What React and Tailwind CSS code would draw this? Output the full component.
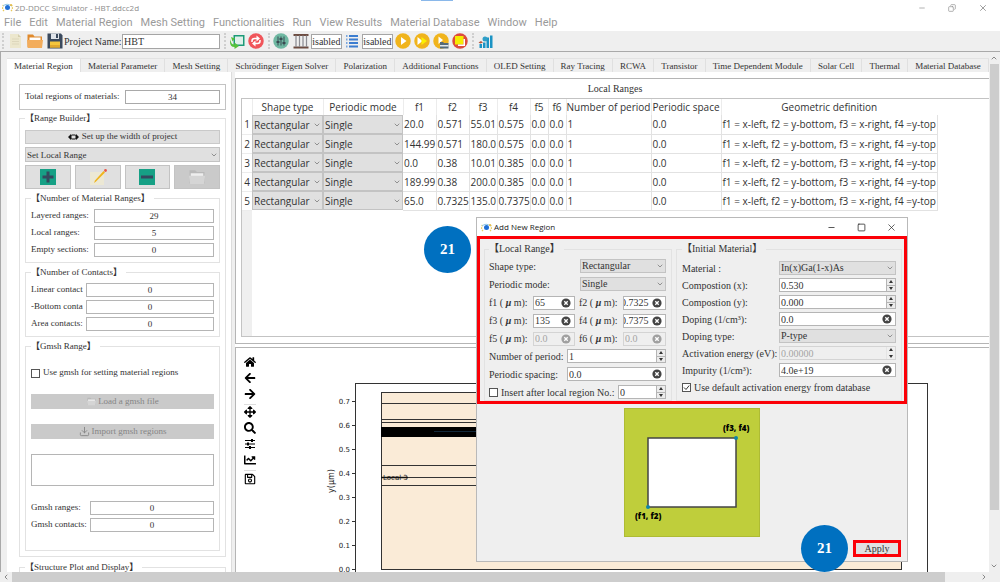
import { ChevronDown, ChevronLeft, ChevronRight, ChevronUp, Copy, Download, Minus, Square, X } from 'lucide-react';
import { FaArrowLeft, FaArrowRight, FaArrowsAlt, FaChartLine, FaHome, FaRegSave, FaSearch } from 'react-icons/fa';

const MENUS = ['File', 'Edit', 'Material Region', 'Mesh Setting', 'Functionalities', 'Run', 'View Results', 'Material Database', 'Window', 'Help'];

const TABS = [
    'Material Region', 'Material Parameter', 'Mesh Setting', 'Schrödinger Eigen Solver', 'Polarization',
    'Additional Functions', 'OLED Setting', 'Ray Tracing', 'RCWA', 'Transistor', 'Time Dependent Module',
    'Solar Cell', 'Thermal', 'Material Database',
];

const COLUMNS = ['Shape type', 'Periodic mode', 'f1', 'f2', 'f3', 'f4', 'f5', 'f6', 'Number of period', 'Periodic space', 'Geometric definition'];

const GEOMETRY = 'f1 = x-left, f2 = y-bottom, f3 = x-right, f4 =y-top';

const ROWS = [
    ['20.0', '0.571', '55.01', '0.575', '0.0', '0.0', '1', '0.0', GEOMETRY],
    ['144.99', '0.571', '180.0', '0.575', '0.0', '0.0', '1', '0.0', GEOMETRY],
    ['0.0', '0.38', '10.01', '0.385', '0.0', '0.0', '1', '0.0', GEOMETRY],
    ['189.99', '0.38', '200.0', '0.385', '0.0', '0.0', '1', '0.0', GEOMETRY],
    ['65.0', '0.7325', '135.0', '0.7375', '0.0', '0.0', '1', '0.0', GEOMETRY],
];

const TICKS = ['0.7', '0.6', '0.5', '0.4', '0.3', '0.2', '0.1', '0.0'];

function AppIcon() {
    return (
        <svg width="11" height="11" viewBox="0 0 22 22" aria-hidden="true">
            <path d="M4 18A9 9 0 0 1 3 6M18 18a9 9 0 0 0 1-12" fill="none" stroke="#e8c95a" strokeWidth="2.5" strokeDasharray="3 2" />
            <path d="M2 8q8-7 17 0" fill="none" stroke="#8fc6e8" strokeWidth="2" />
            <circle cx="11" cy="11" r="5" fill="#1f6fd6" />
            <circle cx="18" cy="6" r="2" fill="#e8b93a" />
        </svg>
    );
}

/* Form pieces */

function Group({ title, className = '', children }) {
    return (
        <fieldset className={`min-w-0 border border-[#e2e2e2] ${className}`}>
            <legend className="h-3 whitespace-nowrap pr-1 leading-3"><b>【</b>{title}<b>】</b></legend>
            {children}
        </fieldset>
    );
}

function Select({ value, label, id, className = '' }) {
    return (
        <div className={`relative ${className}`}>
            <select id={id} aria-label={label} defaultValue={value} className="block h-full w-full appearance-none border border-[#c3c3c3] bg-[#e0e0e0] pl-px leading-3 text-[#333] outline-none">
                <option>{value}</option>
            </select>
            <ChevronDown size={8} className="pointer-events-none absolute top-1/2 right-[2px] -translate-y-1/2 text-[#666]" />
        </div>
    );
}

function ReadOut({ id, label, value, labelClass }) {
    return (
        <div className="flex h-[14px] items-center">
            <label htmlFor={id} className={`shrink-0 overflow-hidden whitespace-nowrap ${labelClass}`}>{label}</label>
            <input id={id} readOnly value={value} className="h-full w-full min-w-0 border border-[#b5b5b5] bg-white text-center" />
        </div>
    );
}

function ClearField({ id, value, disabled, clip }) {
    return (
        <div className={`flex h-[14px] w-full min-w-0 items-center border ${disabled ? 'border-[#d4d4d4] bg-[#efefef]' : 'border-[#b5b5b5] bg-white'}`}>
            <input id={id} defaultValue={value} disabled={disabled} className={`h-full w-full min-w-0 bg-transparent outline-none disabled:text-[#a5a5a5] ${clip ? '-indent-[3px]' : 'pl-px'}`} />
            <button type="button" aria-label="Clear" disabled={disabled} className={`mr-[3px] shrink-0 ${disabled ? 'text-[#a0a0a0]' : 'text-[#444]'}`}>
                <svg className="block" width="10" height="10" viewBox="0 0 10 10">
                    <circle cx="5" cy="5" r="4.6" fill="currentColor" />
                    <path d="M3.3 3.3l3.4 3.4M6.7 3.3L3.3 6.7" stroke="#fff" strokeWidth="1.3" />
                </svg>
            </button>
        </div>
    );
}

function Spinner({ id, label, value, disabled }) {
    return (
        <div className={`flex h-[14px] w-full min-w-0 border ${disabled ? 'border-[#d4d4d4] bg-[#efefef] text-[#a5a5a5]' : 'border-[#b5b5b5] bg-white'}`}>
            <input id={id} aria-label={label} defaultValue={value} disabled={disabled} className="w-full min-w-0 bg-transparent pl-px outline-none" />
            <div className={`flex w-[9px] shrink-0 flex-col border-l ${disabled ? 'border-[#e4e4e4]' : 'border-[#b5b5b5] bg-[#ececec]'}`}>
                <button type="button" aria-label="Increase" disabled={disabled} className={`flex flex-1 items-center justify-center border-b ${disabled ? 'border-transparent' : 'border-[#b5b5b5]'}`}>
                    <svg width="4" height="3" viewBox="0 0 4 3"><path d="M2 0l2 3H0z" fill="#333" /></svg>
                </button>
                <button type="button" aria-label="Decrease" disabled={disabled} className="flex flex-1 items-center justify-center">
                    <svg width="4" height="3" viewBox="0 0 4 3"><path d="M2 3l2-3H0z" fill="#333" /></svg>
                </button>
            </div>
        </div>
    );
}

/* Toolbar */

function Handle() {
    return <div className="mx-1 h-4 border-l-2 border-dotted border-[#cfcfcf]"></div>;
}

function ToolButton({ label, children }) {
    return <button type="button" aria-label={label} className="mr-1 shrink-0">{children}</button>;
}

function RunIcon({ children, fill = '#f0b41c' }) {
    return (
        <svg className="block" width="16" height="16" viewBox="0 0 32 32">
            <circle cx="16" cy="16" r="15.5" fill={fill} />
            {children}
        </svg>
    );
}

function Toolbar() {
    return (
        <div className="flex h-[21px] shrink-0 items-center border-b border-[#a9a9a9] bg-[#efefef] pl-px text-[10px]">
            <div className="mr-1 ml-px h-4 border-l-2 border-dotted border-[#cfcfcf]"></div>
            <ToolButton label="New">
                <svg className="block" width="15" height="16" viewBox="0 0 30 32">
                    <path d="M4 2h16l6 6v22H4z" fill="#ece7cd" />
                    <path d="M20 2v6h6z" fill="#d5cfae" />
                    <path d="M8 12h14M8 17h14M8 22h14" stroke="#d8d2b6" strokeWidth="1.5" />
                </svg>
            </ToolButton>
            <ToolButton label="Open">
                <svg className="block" width="16" height="16" viewBox="0 0 32 32">
                    <path d="M1 3h11l3 4h15v22H1z" fill="#e08a2c" />
                    <path d="M5 9h22v10H5z" fill="#fff" />
                    <path d="M0 14h32l-2 16H2z" fill="#f3ad5c" />
                </svg>
            </ToolButton>
            <button type="button" aria-label="Save" className="mr-px shrink-0">
                <svg className="block" width="16" height="16" viewBox="0 0 32 32">
                    <path d="M1 1h27l3 4v26H1z" fill="#3b4a5e" />
                    <path d="M8 1h16v11H8z" fill="#dfe4ea" />
                    <path d="M18 2h4v8h-4z" fill="#3b4a5e" />
                    <path d="M6 17h20v12H6z" fill="#f4c63d" />
                    <path d="M6 24h20v5H6z" fill="#e0a82e" />
                </svg>
            </button>
            <label htmlFor="project" className="w-[58px] whitespace-nowrap">Project Name:</label>
            <input id="project" defaultValue="HBT" className="h-[15px] w-[98px] border border-[#a5a5a5] bg-white pl-px outline-none" />
            <Handle />
            <button type="button" aria-label="Load result" className="mr-[3px] shrink-0">
                <svg className="block" width="15" height="16" viewBox="0 0 30 32">
                    <path d="M7 4h22v22H7z" fill="#1c9a78" />
                    <path d="M10 7h16v16H10z" fill="#dff0ea" />
                    <path d="M1 12q0 11 8 11v-4l9 7-9 6v-4Q0 28 0 18z" fill="#55c23a" />
                    <path d="M2 8l8 3-5 6z" fill="#55c23a" />
                </svg>
            </button>
            <ToolButton label="Refresh">
                <RunIcon fill="#f0555a">
                    <path d="M8 18v-2q0-5 5-5h5M24 14v2q0 5-5 5h-5" fill="none" stroke="#fff" strokeWidth="3" />
                    <path d="M17 5l7 6-7 6zM15 15l-7 6 7 6z" fill="#fff" />
                </RunIcon>
            </ToolButton>
            <div className="mr-[3px] h-4 border-l-2 border-dotted border-[#cfcfcf]"></div>
            <ToolButton label="Options">
                <RunIcon fill="#6fb8a2">
                    <path d="M10 7v18M16 7v18M22 7v18" stroke="#3a4a52" strokeWidth="2" />
                    <path d="M7 18h6M13 12h6M19 20h6" stroke="#3a4a52" strokeWidth="4" />
                </RunIcon>
            </ToolButton>
            <button type="button" aria-label="Mesh" className="mr-[2px] shrink-0">
                <svg className="block" width="16" height="16" viewBox="0 0 32 32">
                    <path d="M1 4h30M1 29h30" stroke="#6d4c41" strokeWidth="4" />
                    <path d="M6 5v23M13 5v23M20 5v23M27 5v23" stroke="#8d8d93" strokeWidth="2.5" />
                </svg>
            </button>
            <input aria-label="Mesh state" readOnly value="Disabled" className="mr-1 h-[15px] w-[31px] border border-[#a5a5a5] bg-white -indent-[7px]" />
            <ToolButton label="List">
                <svg className="block" width="12" height="14" viewBox="0 0 24 28">
                    <path d="M6 4h18M6 11h18M6 18h18M6 25h18" stroke="#3c7dd0" strokeWidth="4" />
                    <path d="M0 4h3M0 11h3M0 18h3M0 25h3" stroke="#7ba7de" strokeWidth="4" />
                </svg>
            </ToolButton>
            <input aria-label="List state" readOnly value="Disabled" className="mr-[2px] h-[15px] w-[31px] border border-[#a5a5a5] bg-white -indent-[7px]" />
            <div className="flex shrink-0 gap-[3px]">
                <button type="button" aria-label="Run">
                    <RunIcon><path d="M12 8l11 8-11 8z" fill="#fff" /></RunIcon>
                </button>
                <button type="button" aria-label="Run all">
                    <RunIcon>
                        <path d="M7 8l10 8-10 8z" fill="#fff" />
                        <path d="M15 8l11 8-11 8z" fill="#fbf000" />
                    </RunIcon>
                </button>
                <button type="button" aria-label="Run file">
                    <RunIcon>
                        <path d="M11 7l9 7-9 8z" fill="#fff" />
                        <path d="M14 18h6l2 2h9v11H14z" fill="#546a79" />
                        <path d="M14 24h17v3H14z" fill="#dfe7ec" />
                    </RunIcon>
                </button>
                <button type="button" aria-label="Stop">
                    <RunIcon fill="#dd4b3e">
                        <path d="M6 6h17v17H6z" fill="#f5ec00" />
                        <path d="M23 12h3v14H12v-3h11z" fill="#fff" />
                    </RunIcon>
                </button>
            </div>
            <Handle />
            <ToolButton label="Chart">
                <svg className="block" width="15" height="16" viewBox="0 0 30 32">
                    <path d="M3 22h5v8H3zM10 19h5v11h-5zM17 9h5v21h-5zM24 5h5v25h-5z" fill="#1b93c4" />
                    <circle cx="14" cy="12" r="5" fill="#2f9fc8" />
                    <path d="M1 19l5-3 4 3-5 2z" fill="#b5573f" />
                </svg>
            </ToolButton>
        </div>
    );
}

/* Left column */

function IconButton({ label, disabled, children }) {
    return (
        <button type="button" aria-label={label} disabled={disabled} className={`flex h-6 items-center justify-center border border-[#c3c3c3] ${disabled ? 'bg-[#cacaca]' : 'bg-[#e0e0e0]'}`}>
            {children}
        </button>
    );
}

function FolderIcon({ size }) {
    return (
        <svg width={size} height={size} viewBox="0 0 32 32">
            <path d="M4 5h9l3 3h12v18H4z" fill="#b9b9b9" />
            <path d="M6 10h20v8H6z" fill="#eee" />
            <path d="M3 14h26l-2 13H5z" fill="#d5d5d5" />
        </svg>
    );
}

function Sidebar() {
    return (
        <aside className="w-[224px] shrink-0 overflow-hidden pt-3 pr-[5px] pl-3 text-[9px]">
            <div className="flex h-[26px] items-center justify-between border border-[#c3c3c3] px-[5px]">
                <label htmlFor="total">Total regions of materials:</label>
                <input id="total" readOnly value="34" className="h-[14px] w-[95px] border border-[#a9a9a9] bg-white text-center" />
            </div>
            <Group title="Range Builder" className="mt-[2px] px-[5px] pb-[5px]">
                <div className="flex flex-col gap-[3px] pt-[6px]">
                    <button type="button" className="flex h-[14px] items-center justify-center gap-[3px] border border-[#c9c9c9] bg-[#e0e0e0]">
                        <svg width="11" height="6" viewBox="0 0 22 12">
                            <path d="M0 6l6-6v4h10V0l6 6-6 6V8H6v4z" fill="#111" />
                            <rect x="6" y="2" width="10" height="8" rx="2" fill="#e0e0e0" stroke="#111" strokeWidth="2" />
                        </svg>
                        Set up the width of project
                    </button>
                    <Select label="Range kind" value="Set Local Range" className="h-[15px]" />
                    <div className="grid grid-cols-4 gap-1">
                        <IconButton label="Add">
                            <svg width="16" height="16" viewBox="0 0 16 16">
                                <rect width="16" height="16" fill="#16a085" />
                                <path d="M8 2.5v11M2.5 8h11" stroke="#34495e" strokeWidth="3" />
                            </svg>
                        </IconButton>
                        <IconButton label="Edit">
                            <svg width="18" height="16" viewBox="0 0 18 16">
                                <path d="M1 3h14v13H1z" fill="#ece8d4" />
                                <path d="M5 14l1-2.500L14.500 2l1.500 1.500-9 9z" fill="#f0b41c" />
                                <circle cx="16.500" cy="1.500" r="1.400" fill="#e8574a" />
                            </svg>
                        </IconButton>
                        <IconButton label="Remove">
                            <svg width="16" height="16" viewBox="0 0 16 16">
                                <rect width="16" height="16" fill="#16a085" />
                                <path d="M2 8h12" stroke="#34495e" strokeWidth="3" />
                            </svg>
                        </IconButton>
                        <IconButton label="Open folder" disabled><FolderIcon size={20} /></IconButton>
                    </div>
                    <Group title="Number of Material Ranges" className="px-[5px] pb-[5px]">
                        <div className="flex flex-col gap-[3px] pt-[5px]">
                            <ReadOut id="layered" label="Layered ranges:" value="29" labelClass="w-[63px]" />
                            <ReadOut id="local" label="Local ranges:" value="5" labelClass="w-[63px]" />
                            <ReadOut id="empty" label="Empty sections:" value="0" labelClass="w-[63px]" />
                        </div>
                    </Group>
                    <Group title="Number of Contacts" className="px-[5px] pb-[5px]">
                        <div className="flex flex-col gap-[3px] pt-[5px]">
                            <ReadOut id="linear" label="Linear contact" value="0" labelClass="w-[52px] mr-[3px]" />
                            <ReadOut id="bottom" label="-Bottom conta" value="0" labelClass="w-[52px] mr-[3px]" />
                            <ReadOut id="area" label="Area contacts:" value="0" labelClass="w-[52px] mr-[3px]" />
                        </div>
                    </Group>
                    <Group title="Gmsh Range" className="px-[5px] pb-[18px]">
                        <div className="flex flex-col gap-[15px] pt-[15px]">
                            <label className="flex h-3 items-center gap-[3px]">
                                <input type="checkbox" className="size-[9px] appearance-none border border-[#555] bg-white" />
                                Use gmsh for setting material regions
                            </label>
                            <button type="button" disabled className="flex h-[15px] items-center justify-center gap-px bg-[#cacaca] text-[#858585]">
                                <FolderIcon size={11} />
                                Load a gmsh file
                            </button>
                            <button type="button" disabled className="flex h-[15px] items-center justify-center gap-[2px] bg-[#cacaca] text-[#858585]">
                                <Download size={11} />
                                Import gmsh regions
                            </button>
                            <textarea aria-label="Gmsh regions" className="block h-8 resize-none border border-[#b5b5b5] bg-white"></textarea>
                            <div className="flex flex-col gap-[3px]">
                                <ReadOut id="gmshRanges" label="Gmsh ranges:" value="0" labelClass="w-[59px]" />
                                <ReadOut id="gmshContacts" label="Gmsh contacts:" value="0" labelClass="w-[59px]" />
                            </div>
                        </div>
                    </Group>
                </div>
            </Group>
            <Group title="Structure Plot and Display" className="mt-1 px-[5px] pb-8" />
        </aside>
    );
}

/* Right column */

function RangeTable() {
    return (
        <section className="flex h-[266px] shrink-0 flex-col border-t border-b border-l border-[#b5b5b5] pl-[5px]">
            <h2 className="h-[19px] pt-[2px] text-center text-[10px] leading-4">Local Ranges</h2>
            <div className="mb-[6px] flex flex-1 flex-col border-t border-b border-l border-[#c3c3c3]">
                <table className="w-[695px] table-fixed border-collapse font-['Open_Sans','Noto_Sans',sans-serif] text-[10px] leading-3 whitespace-nowrap text-[#333]">
                    <colgroup>
                        <col className="w-[10px]" />
                        <col className="w-[71px]" />
                        <col className="w-20" />
                        <col className="w-[33px]" />
                        <col className="w-[33px]" />
                        <col className="w-7" />
                        <col className="w-[33px]" />
                        <col className="w-[18px]" />
                        <col className="w-[18px]" />
                        <col className="w-[85px]" />
                        <col className="w-[70px]" />
                        <col className="w-[216px]" />
                    </colgroup>
                    <thead>
                        <tr className="h-4">
                            <th aria-label="Row"></th>
                            {COLUMNS.map((name) => (
                                <th key={name} className="border-l border-[#ececec] p-0 font-normal">{name}</th>
                            ))}
                        </tr>
                    </thead>
                    <tbody>
                        {ROWS.map((row, i) => (
                            <tr key={i} className="h-[19px]">
                                <th scope="row" className="border-b border-[#ececec] p-0 font-normal">{i + 1}</th>
                                <td className="p-0"><Select label="Shape type" value="Rectangular" className="h-[19px]" /></td>
                                <td className="p-0"><Select label="Periodic mode" value="Single" className="h-[19px]" /></td>
                                {row.map((cell, j) => (
                                    <td key={j} className="border-r border-b border-[#e2e2e2] p-0 pl-px">{cell}</td>
                                ))}
                            </tr>
                        ))}
                    </tbody>
                </table>
                <div className="w-[10px] flex-1 bg-[#efefef]"></div>
            </div>
        </section>
    );
}

function StructurePlot() {
    return (
        <svg className="shrink-0" width="716" height="224" viewBox="272 348 716 224" fontFamily="DejaVu Sans" fontSize="8" fill="#222">
            <rect x="355.5" y="383.5" width="572" height="240" fill="#fff" stroke="#333" />
            <rect x="381.5" y="392.5" width="520" height="177" fill="#faebd7" stroke="#333" />
            {[403.5, 419.5, 422.5, 465.5, 477.5, 485.5].map((y) => (
                <path key={y} d={`M381 ${y}H902`} stroke="#333" />
            ))}
            <rect x="381" y="427" width="521" height="10" fill="#000" />
            <path d="M434 431.5H476" stroke="#12283a" />
            {TICKS.map((tick, i) => (
                <g key={tick}>
                    <path d={`M352 ${401.5 + i * 24}h3`} stroke="#333" />
                    <text x="350" y={404 + i * 24} textAnchor="end" fontSize="7">{tick}</text>
                </g>
            ))}
            <text x="383" y="480" fontSize="7">Local 3</text>
            <path d="M381 477.5H408" stroke="#111" strokeWidth="1.5" />
            <text transform="translate(334 481) rotate(-90)" textAnchor="middle">y(μm)</text>
        </svg>
    );
}

function PlotPanel() {
    return (
        <section className="flex min-h-0 flex-1 overflow-hidden border-t border-l border-[#b5b5b5]">
            <div className="flex w-9 shrink-0 flex-col items-center gap-1 pt-2 pr-2 text-[12px] text-black">
                <button type="button" aria-label="Home"><FaHome /></button>
                <button type="button" aria-label="Back"><FaArrowLeft /></button>
                <button type="button" aria-label="Forward"><FaArrowRight /></button>
                <button type="button" aria-label="Pan" className="border-t border-[#ddd] pt-px"><FaArrowsAlt /></button>
                <button type="button" aria-label="Zoom"><FaSearch /></button>
                <button type="button" aria-label="Subplots">
                    <svg className="block" width="12" height="12" viewBox="0 0 12 12" stroke="#000" strokeWidth="1.2">
                        <path d="M1 2.5h10M1 6h10M1 9.5h10" />
                        <path d="M8 1v3M4 4.5v3M6 8v3" strokeWidth="2" />
                    </svg>
                </button>
                <button type="button" aria-label="Axes"><FaChartLine /></button>
                <button type="button" aria-label="Save figure" className="border-t border-[#ddd] pt-[2px]"><FaRegSave /></button>
            </div>
            <StructurePlot />
        </section>
    );
}

/* Add New Region window */

function Micro({ name }) {
    return <>{name} ( <b className="italic">μ</b> m):</>;
}

function PairRow({ left, right }) {
    return (
        <div className="grid h-[14px] grid-cols-[44px_42px_48px_43px] items-center">
            {[left, right].map((f, i) => [
                <label key={f.id} htmlFor={f.id} className={`whitespace-nowrap ${i ? 'pl-1' : ''}`}><Micro name={f.id} /></label>,
                <ClearField key={`${f.id}-field`} {...f} />,
            ])}
        </div>
    );
}

function Field({ id, label, labelClass, children }) {
    return (
        <div className="flex h-[14px] items-center">
            <label htmlFor={id} className={`shrink-0 whitespace-nowrap ${labelClass}`}>{label}</label>
            {children}
        </div>
    );
}

function RegionWindow() {
    return (
        <div role="dialog" aria-label="Add New Region" className="absolute top-[217px] left-[476px] flex h-[345px] w-[432px] flex-col border border-[#b9b9b9] bg-[#efefef] text-[10px]">
            <div className="flex h-[18px] shrink-0 items-center bg-white pl-1 font-['Open_Sans','Noto_Sans',sans-serif] text-[8px] text-[#222]">
                <AppIcon />
                <span className="ml-[2px] flex-1">Add New Region</span>
                <button type="button" aria-label="Minimize" className="flex w-[30px] justify-center"><Minus size={9} /></button>
                <button type="button" aria-label="Maximize" className="flex w-[30px] justify-center"><Square size={9} /></button>
                <button type="button" aria-label="Close" className="flex w-[31px] justify-center"><X size={11} strokeWidth={1.5} /></button>
            </div>

            <div className="flex h-[168px] shrink-0 gap-1 border-3 border-[#fb0007] pt-1 pr-[2px] pl-[4px]">
                <Group title="Local Range" className="w-[188px] pr-[5px] pl-1">
                    <div className="flex flex-col gap-1 pt-1">
                        <Field id="shape" label="Shape type:" labelClass="w-[91px]">
                            <Select id="shape" value="Rectangular" className="h-[14px] w-full" />
                        </Field>
                        <Field id="mode" label="Periodic mode:" labelClass="w-[91px]">
                            <Select id="mode" value="Single" className="h-[14px] w-full" />
                        </Field>
                        <PairRow left={{ id: 'f1', value: '65' }} right={{ id: 'f2', value: '0.7325', clip: true }} />
                        <PairRow left={{ id: 'f3', value: '135' }} right={{ id: 'f4', value: '0.7375', clip: true }} />
                        <PairRow left={{ id: 'f5', value: '0.0', disabled: true }} right={{ id: 'f6', value: '0.0', disabled: true }} />
                        <Field id="period" label="Number of period:" labelClass="w-[78px]"><Spinner id="period" value="1" /></Field>
                        <Field id="spacing" label="Periodic spacing:" labelClass="w-[78px]"><ClearField id="spacing" value="0.0" /></Field>
                        <div className="flex h-[14px] items-center">
                            <label className="flex w-[129px] shrink-0 items-center gap-[3px] whitespace-nowrap">
                                <input type="checkbox" className="size-[9px] appearance-none border border-[#555] bg-white" />
                                Insert after local region No.:
                            </label>
                            <Spinner label="Local region No." value="0" />
                        </div>
                    </div>
                </Group>
                <Group title="Initial Material" className="flex-1 px-[5px]">
                    <div className="flex flex-col gap-[3px] pt-[6px]">
                        <Field id="material" label="Material :" labelClass="w-[97px]">
                            <Select id="material" value="In(x)Ga(1-x)As" className="h-[14px] w-full" />
                        </Field>
                        <Field id="compX" label="Compostion (x):" labelClass="w-[97px]"><Spinner id="compX" value="0.530" /></Field>
                        <Field id="compY" label="Compostion (y):" labelClass="w-[97px]"><Spinner id="compY" value="0.000" /></Field>
                        <Field id="doping" label="Doping (1/cm³):" labelClass="w-[97px]"><ClearField id="doping" value="0.0" /></Field>
                        <Field id="dopingType" label="Doping type:" labelClass="w-[97px]">
                            <Select id="dopingType" value="P-type" className="h-[14px] w-full" />
                        </Field>
                        <Field id="activation" label="Activation energy (eV):" labelClass="w-[97px]"><Spinner id="activation" value="0.00000" disabled /></Field>
                        <Field id="impurity" label="Impurity (1/cm³):" labelClass="w-[97px]"><ClearField id="impurity" value="4.0e+19" /></Field>
                        <label className="flex h-[14px] items-center gap-[3px] whitespace-nowrap">
                            <span className="relative flex">
                                <input type="checkbox" defaultChecked className="size-[9px] appearance-none border border-[#555] bg-white" />
                                <svg className="pointer-events-none absolute inset-0" width="9" height="9" viewBox="0 0 9 9">
                                    <path d="M2 4.5l2 2 3.2-4" fill="none" stroke="#333" />
                                </svg>
                            </span>
                            Use default activation energy from database
                        </label>
                    </div>
                </Group>
            </div>

            <svg className="mt-1 shrink-0 self-center" width="136" height="129" viewBox="0 0 136 129" fontFamily="Open Sans" fontSize="8" fontWeight="800">
                <rect x="0.5" y="0.5" width="135" height="128" fill="#bfce3b" stroke="#aebb34" />
                <rect x="24" y="30" width="88" height="69" fill="#fff" stroke="#444" strokeWidth="1.5" />
                <circle cx="112" cy="30" r="2" fill="#0f84a8" />
                <circle cx="24" cy="99" r="2" fill="#0f84a8" />
                <text x="99" y="23">(f3, f4)</text>
                <text x="11" y="111">(f1, f2)</text>
            </svg>
            <div className="mt-[3px] flex justify-end pr-[6px]">
                <button type="button" className="h-[17px] w-12 border-3 border-[#fb0007] bg-[#e1e1e1] leading-[11px]">Apply</button>
            </div>
        </div>
    );
}

function Step({ className }) {
    return (
        <div className={`absolute flex size-[47px] items-center justify-center rounded-full bg-[#0070c0] text-[15px] font-bold text-white ${className}`}>21</div>
    );
}

export default function App() {
    return (
        <div className="relative flex h-screen w-full flex-col overflow-hidden bg-white font-['Liberation_Serif','Noto_Sans_CJK_TC',serif] text-[#333]">
            <div className="absolute top-0 left-[421px] h-px w-8 bg-[#8ab8ea]"></div>

            <header className="shrink-0">
                <div className="flex h-[15px] items-center pl-[2px] font-['Open_Sans','Noto_Sans',sans-serif] text-[8px] text-[#8c8c8c]">
                    <AppIcon />
                    <span className="ml-[2px] flex-1">2D-DDCC Simulator - HBT.ddcc2d</span>
                    <button type="button" aria-label="Minimize" className="flex w-[31px] justify-center"><Minus size={8} /></button>
                    <button type="button" aria-label="Restore" className="flex w-[30px] justify-center"><Copy size={8} className="-scale-x-100" /></button>
                    <button type="button" aria-label="Close" className="mr-[2px] flex w-[31px] justify-center"><X size={10} /></button>
                </div>
                <nav className="flex h-4 items-center gap-2 pl-1 font-[Roboto,'Noto_Sans',sans-serif] text-[11px] text-[#9a9a9a]">
                    {MENUS.map((menu) => <button key={menu} type="button" className="leading-4">{menu}</button>)}
                </nav>
            </header>

            <Toolbar />

            <div className="flex min-h-0 flex-1 border-l border-[#a9a9a9]">
                <main className="flex min-w-0 flex-1 flex-col bg-[#efefef] pt-[6px] pl-[6px]">
                    <div role="tablist" className="flex h-[14px] shrink-0 overflow-hidden border-t border-[#e2e2e2] text-[9px]">
                        {TABS.map((tab, i) => (
                            <button key={tab} type="button" role="tab" aria-selected={i === 0} className={`grow border-r border-[#e0e0e0] px-[6px] leading-3 whitespace-nowrap ${i === 0 ? 'bg-white' : ''}`}>{tab}</button>
                        ))}
                    </div>
                    <div className="flex min-h-0 flex-1 bg-white">
                        <Sidebar />
                        <div className="w-1 shrink-0 border-l border-[#dcdcdc] bg-[#efefef]"></div>
                        <div className="flex min-w-0 flex-1 flex-col gap-[3px] pt-[6px]">
                            <RangeTable />
                            <PlotPanel />
                        </div>
                    </div>
                </main>
                <div className="flex w-[11px] shrink-0 flex-col items-center bg-[#efefef] pr-px text-[#555]">
                    <ChevronUp size={8} className="my-[2px] shrink-0" />
                    <div className="w-[9px] grow-[9] bg-[#cdcdcd]"></div>
                    <div className="grow"></div>
                    <ChevronDown size={8} className="my-[2px] shrink-0" />
                </div>
            </div>
            <div className="flex h-[10px] shrink-0 items-center bg-[#efefef] text-[#555]">
                <ChevronLeft size={8} className="mx-[2px]" />
                <div className="h-full grow-[27] bg-[#cdcdcd]"></div>
                <div className="grow"></div>
                <ChevronRight size={8} className="mr-3" />
            </div>

            <RegionWindow />
            <Step className="top-[226px] left-[424px]" />
            <Step className="top-[525px] left-[801px]" />
        </div>
    );
}
